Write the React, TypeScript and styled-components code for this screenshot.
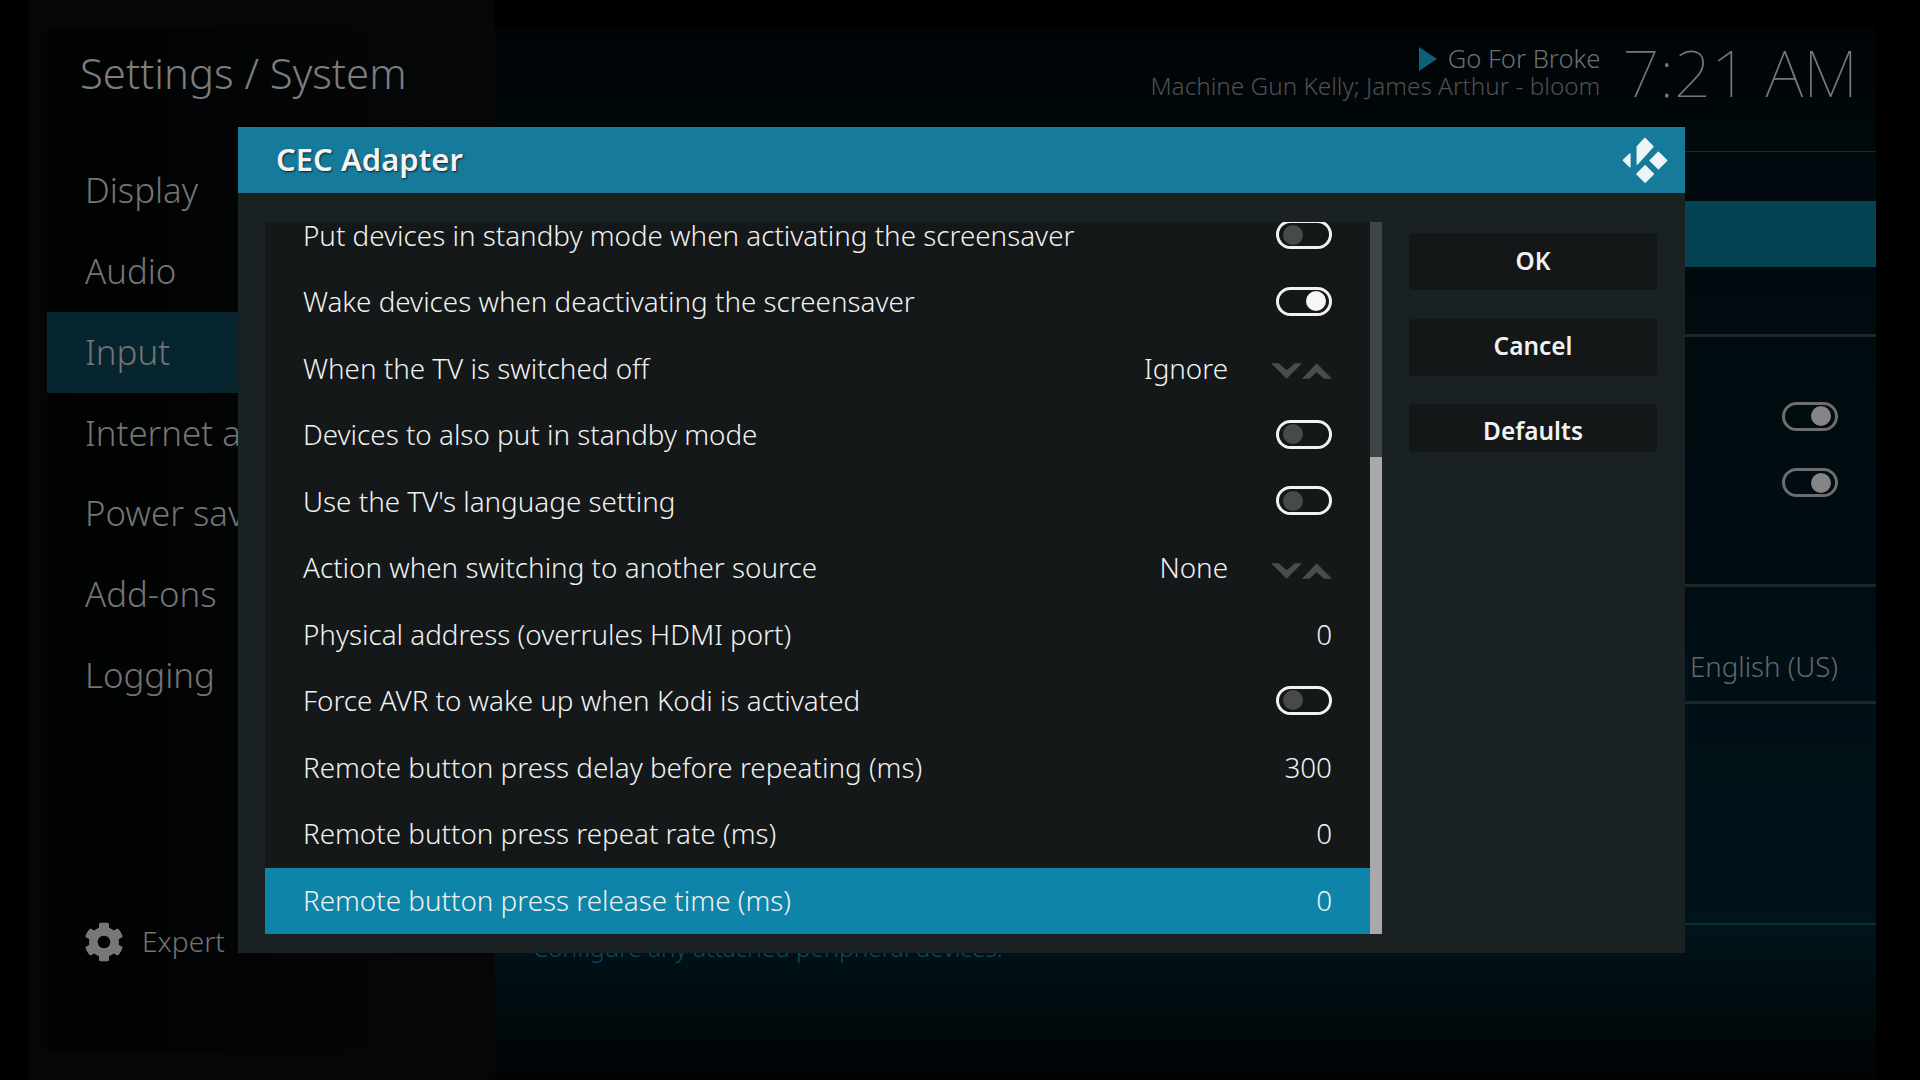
import styled, { createGlobalStyle } from "styled-components";
import { FaCog } from "react-icons/fa";

const GlobalStyle = createGlobalStyle`
  html, body {
    margin: 0;
    padding: 0;
    background: #000;
    overflow: hidden;
  }
  * {
    box-sizing: border-box;
  }
`;

const Page = styled.div`
  position: relative;
  width: 1920px;
  height: 1080px;
  padding-left: 28px;
  display: flex;
  background: #000;
  font-family: "Noto Sans", sans-serif;
  overflow: hidden;
`;

const SideFrame = styled.div`
  width: 467px;
  height: 1080px;
  padding: 27px 0 27px 19px;
  background: #060606;
`;

const Side = styled.aside`
  height: 100%;
  display: flex;
  flex-direction: column;
  background: linear-gradient(90deg, #010202 0%, #060708 100%);
`;

const SideTitle = styled.h1`
  height: 123.6px;
  margin: 0;
  padding: 20px 0 0 33px;
  font-size: 41.8px;
  line-height: 52px;
  font-weight: 300;
  color: #7d7d7d;
`;

const SideItem = styled.div<{ $active?: boolean }>`
  height: 80.7px;
  padding: 0 0 2px 38px;
  display: flex;
  align-items: center;
  font-size: 34.8px;
  font-weight: 300;
  white-space: nowrap;
  color: #747474;
  background: ${(p) => (p.$active ? "#07252e" : "transparent")};
`;

const ExpertRow = styled.div`
  margin-top: auto;
  margin-bottom: 91px;
  padding-left: 37px;
  display: flex;
  align-items: center;
  gap: 18px;
  font-size: 28.2px;
  font-weight: 300;
  color: #737373;
  svg {
    margin-top: 2px;
  }
`;

const Main = styled.main`
  width: 1381px;
  height: 1080px;
  margin-top: 27px;
  display: flex;
  flex-direction: column;
  background: linear-gradient(
    180deg,
    #000406 0%,
    #00090d 12%,
    #000c11 40%,
    #00141a 84%,
    #000a0d 92%,
    #000 100%
  );
`;

const TopBar = styled.header`
  height: 124px;
  padding: 9px 18px 0 0;
  display: flex;
  justify-content: flex-end;
  gap: 22px;
`;

const NowPlaying = styled.div`
  padding-top: 9px;
  display: flex;
  flex-direction: column;
  align-items: flex-end;
  font-weight: 300;
`;

const TrackTitle = styled.div`
  display: flex;
  align-items: center;
  gap: 11px;
  font-size: 25.6px;
  line-height: 27px;
  color: #6f6f6f;
`;

const TrackArtist = styled.div`
  font-size: 24.3px;
  line-height: 28px;
  color: #505050;
`;

const Clock = styled.div`
  font-size: 65.4px;
  line-height: 72px;
  font-weight: 100;
  color: #777;
`;

const Rule = styled.div<{ $teal?: boolean; $size?: number; $top?: number }>`
  flex: none;
  height: ${(p) => p.$size ?? 3}px;
  margin-top: ${(p) => p.$top ?? 0}px;
  background: ${(p) => (p.$teal ? "#06323f" : "#1f2628")};
`;

const FocusBand = styled.div`
  flex: none;
  height: 66px;
  margin-top: 49px;
  background: #064352;
`;

const SettingRow = styled.div<{ $top?: number }>`
  flex: none;
  height: 66.5px;
  margin-top: ${(p) => p.$top ?? 0}px;
  padding-right: 38px;
  display: flex;
  align-items: center;
  justify-content: flex-end;
`;

const SettingValue = styled.span`
  margin-bottom: 3px;
  font-size: 27.6px;
  font-weight: 300;
  color: #686868;
`;

const Description = styled.div`
  margin-top: 6px;
  padding-left: 38px;
  font-size: 24.3px;
  font-weight: 300;
  line-height: 34px;
  color: #0a4c60;
`;

const Dialog = styled.section`
  position: absolute;
  left: 238px;
  top: 127px;
  width: 1447px;
  height: 826px;
  background: #1a2123;
`;

const DialogHeader = styled.div`
  height: 66px;
  padding: 0 17px 0 38px;
  display: flex;
  align-items: center;
  justify-content: space-between;
  background: #167a9a;
`;

const DialogTitle = styled.h2`
  margin: 0 0 2px;
  font-size: 31px;
  font-weight: 600;
  color: #f4f4f4;
  text-shadow: 1px 1px 2px rgba(0, 0, 0, 0.7);
`;

const DialogBody = styled.div`
  padding: 29px 28px 0 27px;
  display: flex;
  align-items: flex-start;
`;

const List = styled.div`
  width: 1105px;
  height: 712px;
  display: flex;
  flex-direction: column;
  justify-content: flex-end;
  overflow: hidden;
  border-radius: 3px 0 0 0;
  background: #141819;
`;

const ListRow = styled.div<{ $selected?: boolean }>`
  flex: none;
  height: 66.5px;
  padding: 0 38px 2px;
  display: flex;
  align-items: center;
  justify-content: space-between;
  font-size: 27.8px;
  font-weight: 300;
  color: #f1f1f1;
  background: ${(p) => (p.$selected ? "#0e85a8" : "transparent")};
`;

const SpinValue = styled.div`
  display: flex;
  align-items: center;
  gap: 43px;
  svg {
    margin-top: 7px;
  }
`;

const ScrollTrack = styled.div`
  width: 12px;
  height: 712px;
  display: flex;
  flex-direction: column;
  justify-content: flex-end;
  background: #3f4446;
`;

const ScrollThumb = styled.div`
  height: 477px;
  background: #a9a9a9;
`;

const ButtonColumn = styled.div`
  width: 248px;
  margin: 11px 0 0 27px;
  display: flex;
  flex-direction: column;
`;

const DialogButton = styled.div<{ $height?: number; $top?: number; $lift?: number }>`
  height: ${(p) => p.$height ?? 57}px;
  margin-top: ${(p) => p.$top ?? 0}px;
  padding-bottom: ${(p) => Math.max(p.$lift ?? 0, 0)}px;
  padding-top: ${(p) => Math.max(-(p.$lift ?? 0), 0)}px;
  display: flex;
  align-items: center;
  justify-content: center;
  border-radius: 4px;
  font-size: 24.4px;
  font-weight: 600;
  color: #f2f2f2;
  background: #131718;
`;

const ToggleTrack = styled.div<{ $on?: boolean; $dim?: boolean }>`
  width: 56px;
  height: 29px;
  padding: 0 3px 0 4px;
  display: flex;
  align-items: center;
  justify-content: ${(p) => (p.$on ? "flex-end" : "flex-start")};
  border: 3px solid ${(p) => (p.$dim ? "#6d6d6d" : "#f2f2f2")};
  border-radius: 15px;
`;

const ToggleKnob = styled.div<{ $on?: boolean; $dim?: boolean }>`
  width: 20px;
  height: 20px;
  margin-right: ${(p) => (p.$dim ? "1px" : 0)};
  border-radius: 50%;
  background: ${(p) => (p.$dim ? "#858585" : p.$on ? "#f6f6f6" : "#47494b")};
`;

function Toggle({ on, dim }: { on?: boolean; dim?: boolean }) {
  return (
    <ToggleTrack $on={on} $dim={dim}>
      <ToggleKnob $on={on} $dim={dim} />
    </ToggleTrack>
  );
}

function SpinArrows() {
  return (
    <svg width="61" height="16" viewBox="153 492 183 46">
      <path
        fill="#4a4c4e"
        d="M153 492h23l24 21 24-21h22l-46 46zM246 538l44-46 46 46h-24l-22-20-22 20z"
      />
    </svg>
  );
}

function KodiLogo() {
  return (
    <svg width="46" height="47" viewBox="67 34 139 142">
      <g fill="#eef5f8" stroke="#eef5f8" strokeWidth="4" strokeLinejoin="round">
        <path d="M71 104 91 85v39z" />
        <path d="M113 63 136 38l25 25-48 53z" />
        <path d="M177 80l25 25-25 25-25-25z" />
        <path d="M137 121l25 25-25 25-25-25z" />
      </g>
    </svg>
  );
}

type Row = {
  label: string;
  value?: string;
  toggle?: boolean;
  spin?: boolean;
  selected?: boolean;
};

const rows: Row[] = [
  { label: "Put devices in standby mode when activating the screensaver", toggle: false },
  { label: "Wake devices when deactivating the screensaver", toggle: true },
  { label: "When the TV is switched off", value: "Ignore", spin: true },
  { label: "Devices to also put in standby mode", toggle: false },
  { label: "Use the TV's language setting", toggle: false },
  { label: "Action when switching to another source", value: "None", spin: true },
  { label: "Physical address (overrules HDMI port)", value: "0" },
  { label: "Force AVR to wake up when Kodi is activated", toggle: false },
  { label: "Remote button press delay before repeating (ms)", value: "300" },
  { label: "Remote button press repeat rate (ms)", value: "0" },
  { label: "Remote button press release time (ms)", value: "0", selected: true },
];

const sections = ["Display", "Audio", "Input", "Internet access", "Power saving", "Add-ons", "Logging"];

export default function App() {
  return (
    <Page>
      <GlobalStyle />
      <SideFrame>
        <Side>
          <SideTitle>Settings / System</SideTitle>
          {sections.map((name) => (
            <SideItem key={name} $active={name === "Input"}>
              {name}
            </SideItem>
          ))}
          <ExpertRow>
            <FaCog size={40} color="#777" />
            Expert
          </ExpertRow>
        </Side>
      </SideFrame>

      <Main>
        <TopBar>
          <NowPlaying>
            <TrackTitle>
              <svg width="18" height="24" viewBox="0 0 18 24">
                <path fill="#0e5f78" d="M0 0l18 12L0 24z" />
              </svg>
              Go For Broke
            </TrackTitle>
            <TrackArtist>Machine Gun Kelly; James Arthur - bloom</TrackArtist>
          </NowPlaying>
          <Clock>7:21 AM</Clock>
        </TopBar>
        <Rule $teal $size={1} />
        <FocusBand />
        <Rule $top={67} />
        <SettingRow $top={46}>
          <Toggle on dim />
        </SettingRow>
        <SettingRow>
          <Toggle on dim />
        </SettingRow>
        <Rule $top={68} />
        <SettingRow $top={47}>
          <SettingValue>English (US)</SettingValue>
        </SettingRow>
        <Rule />
        <Rule $teal $size={2} $top={219} />
        <Description>Configure any attached peripheral devices.</Description>
      </Main>

      <Dialog>
        <DialogHeader>
          <DialogTitle>CEC Adapter</DialogTitle>
          <KodiLogo />
        </DialogHeader>
        <DialogBody>
          <List>
            {rows.map((row) => (
              <ListRow key={row.label} $selected={row.selected}>
                <span>{row.label}</span>
                {row.toggle !== undefined && <Toggle on={row.toggle} />}
                {row.spin ? (
                  <SpinValue>
                    {row.value}
                    <SpinArrows />
                  </SpinValue>
                ) : (
                  row.value && <span>{row.value}</span>
                )}
              </ListRow>
            ))}
          </List>
          <ScrollTrack>
            <ScrollThumb />
          </ScrollTrack>
          <ButtonColumn>
            <DialogButton $lift={2}>OK</DialogButton>
            <DialogButton $top={29} $lift={4}>
              Cancel
            </DialogButton>
            <DialogButton $top={28} $height={48} $lift={-4}>
              Defaults
            </DialogButton>
          </ButtonColumn>
        </DialogBody>
      </Dialog>
    </Page>
  );
}
